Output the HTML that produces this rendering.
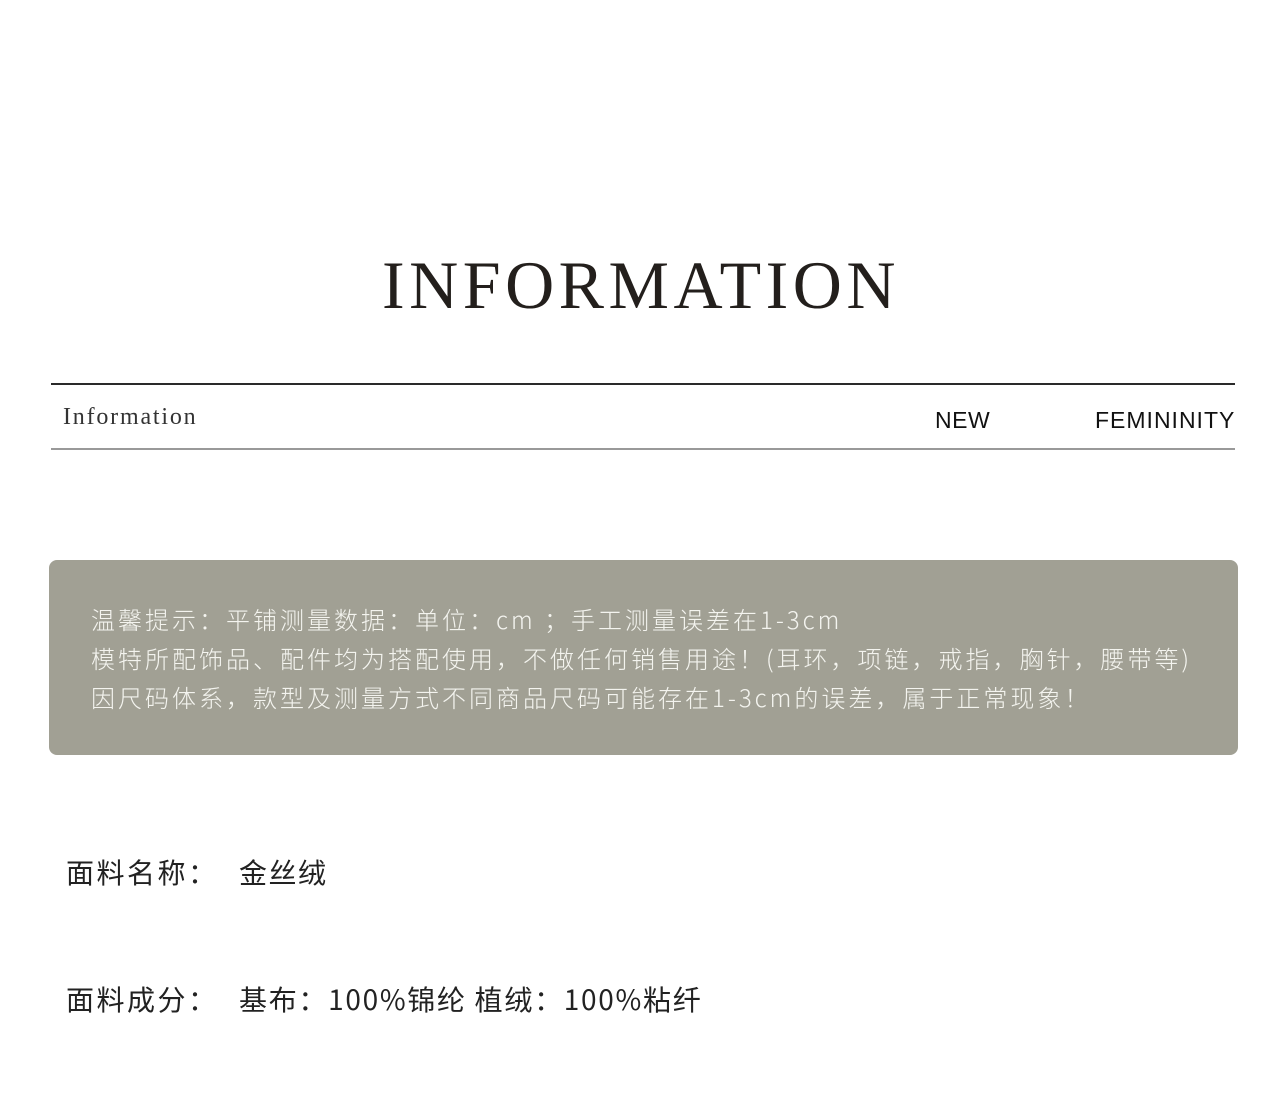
<!DOCTYPE html>
<html><head><meta charset="utf-8"><style>
body{margin:0;width:1280px;height:1096px;background:#fff;position:relative;overflow:hidden;font-family:"Noto Sans CJK SC",sans-serif}
.a{position:absolute;white-space:nowrap}
</style></head><body>
<div class="a" style="left:382px;top:245px;font-family:'Liberation Serif',serif;font-size:68px;letter-spacing:4.5px;color:#231f1c;line-height:80px">INFORMATION</div>
<div class="a" style="left:51px;top:383px;width:1184px;height:2px;background:#2a2a2a"></div>
<div class="a" style="left:51px;top:448px;width:1184px;height:2px;background:#999"></div>
<div class="a" style="left:63px;top:404px;font-family:'Liberation Serif',serif;font-size:24px;color:#333;letter-spacing:1.8px">Information</div>
<div class="a" style="left:935px;top:407px;font-family:'Liberation Sans',sans-serif;font-size:23px;color:#111;letter-spacing:0.5px">NEW</div>
<div class="a" style="left:1095px;top:407px;font-family:'Liberation Sans',sans-serif;font-size:23px;color:#111;letter-spacing:1px">FEMININITY</div>
<div class="a" style="left:49px;top:560px;width:1189px;height:195px;background:#a1a094;border-radius:8px"></div>
<div class="a" style="left:91px;top:599px;font-size:24px;line-height:39px;color:#f4f4ef;font-weight:300;letter-spacing:3px">温馨提示：平铺测量数据：单位：cm ；手工测量误差在1-3cm<br>模特所配饰品、配件均为搭配使用，不做任何销售用途！(耳环，项链，戒指，胸针，腰带等)<br>因尺码体系，款型及测量方式不同商品尺码可能存在1-3cm的误差，属于正常现象！</div>
<div class="a" style="left:66px;top:852px;font-size:28px;color:#222;letter-spacing:2.5px">面料名称：</div>
<div class="a" style="left:239px;top:852px;font-size:28px;color:#222;letter-spacing:1.5px">金丝绒</div>
<div class="a" style="left:66px;top:979px;font-size:28px;color:#222;letter-spacing:2.5px">面料成分：</div>
<div class="a" style="left:239px;top:979px;font-size:28px;color:#222;letter-spacing:1.7px">基布：100%锦纶 植绒：100%粘纤</div>
</body></html>
